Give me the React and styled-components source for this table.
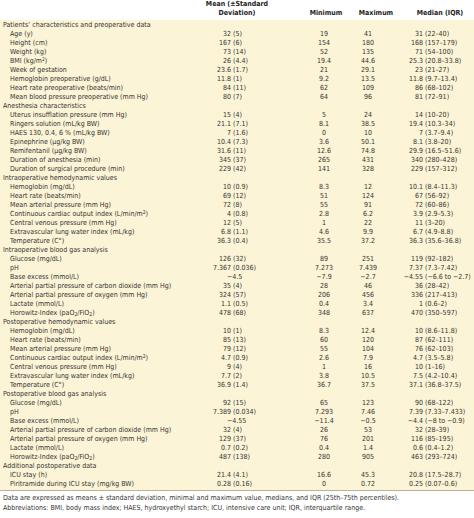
import React from 'react'
import styled, { createGlobalStyle } from 'styled-components'

const GlobalStyle = createGlobalStyle`
	html, body {
		margin: 0;
		padding: 0;
		background: #fff;
	}
	body {
		font-family: 'DejaVu Sans Condensed', 'Liberation Sans', Arial, sans-serif;
		color: #333;
	}
`

const Page = styled.div`
	width: 474px;
	font-size: 7px;
	line-height: 9px;
`

const HeaderRow = styled.div`
	display: grid;
	grid-template-columns: 200px 74px 22px 60px 40px 10px 68px;
	align-items: end;
	height: 20px;
	padding-bottom: 2px;
	box-sizing: border-box;
	background: #fff;
	font-weight: 700;
	color: #222;
`

const HeadCell = styled.div`
	grid-column: ${(props) => props.col};
	display: flex;
	flex-direction: column;
	align-items: center;
	white-space: nowrap;
`

const Body = styled.div`
	background: #fcf4d6;
	padding: 1px 0 1px;
	border-bottom: 1px solid #b9b29a;
`

const Row = styled.div`
	display: grid;
	grid-template-columns: 200px 31px 65px 56px 32px 39px 1fr;
	height: 9px;
	white-space: nowrap;
`

const Section = styled.div`
	height: 9px;
	padding-left: 3px;
	white-space: nowrap;
`

const Label = styled.div`
	padding-left: 10px;
`

const Num = styled.div`
	text-align: right;
`

const Spread = styled.div`
	padding-left: 2px;
`

const Solo = styled.div`
	grid-column: span 2;
	padding-left: 27px;
`

const Center = styled.div`
	text-align: center;
`

const Sub = styled.sub`
	font-size: 5px;
	line-height: 0;
	vertical-align: -1px;
`

const Sup = styled.sup`
	font-size: 5px;
	line-height: 0;
	vertical-align: 2px;
`

const Footer = styled.div`
	padding: 2px 3px 0;
	font-size: 7px;
	line-height: 10px;
	white-space: nowrap;
`

const m2 = (
	<>
		m<Sup>2</Sup>
	</>
)
const horowitz = (
	<>
		Horowitz-Index (paO<Sub>2</Sub>/FiO<Sub>2</Sub>)
	</>
)

const data = [
	['Patients’ characteristics and preoperative data'],
	['Age (y)', '32 (5)', '19', '41', '31 (22–40)'],
	['Height (cm)', '167 (6)', '154', '180', '168 (157–179)'],
	['Weight (kg)', '73 (14)', '52', '135', '71 (54–100)'],
	[<>BMI (kg/{m2})</>, '26 (4.4)', '19.4', '44.6', '25.3 (20.8–33.8)'],
	['Week of gestation', '23.6 (1.7)', '21', '29.1', '23 (21–27)'],
	['Hemoglobin preoperative (g/dL)', '11.8 (1)', '9.2', '13.5', '11.8 (9.7–13.4)'],
	['Heart rate preoperative (beats/min)', '84 (11)', '62', '109', '86 (68–102)'],
	['Mean blood pressure preoperative (mm Hg)', '80 (7)', '64', '96', '81 (72–91)'],
	['Anesthesia characteristics'],
	['Uterus insufflation pressure (mm Hg)', '15 (4)', '5', '24', '14 (10–20)'],
	['Ringers solution (mL/kg BW)', '21.1 (7.1)', '8.1', '38.5', '19.4 (10.3–34)'],
	['HAES 130, 0.4, 6 % (mL/kg BW)', '7 (1.6)', '0', '10', '7 (3.7–9.4)'],
	['Epinephrine (μg/kg BW)', '10.4 (7.3)', '3.6', '50.1', '8.1 (3.8–20)'],
	['Remifentanil (μg/kg BW)', '31.6 (11)', '12.6', '74.8', '29.9 (16.5–51.6)'],
	['Duration of anesthesia (min)', '345 (37)', '265', '431', '340 (280–428)'],
	['Duration of surgical procedure (min)', '229 (42)', '141', '328', '229 (157–312)'],
	['Intraoperative hemodynamic values'],
	['Hemoglobin (mg/dL)', '10 (0.9)', '8.3', '12', '10.1 (8.4–11.3)'],
	['Heart rate (beats/min)', '69 (12)', '51', '124', '67 (56–92)'],
	['Mean arterial pressure (mm Hg)', '72 (8)', '55', '91', '72 (60–86)'],
	[<>Continuous cardiac output index (L/min/{m2})</>, '4 (0.8)', '2.8', '6.2', '3.9 (2.9–5.3)'],
	['Central venous pressure (mm Hg)', '12 (5)', '1', '22', '11 (3–20)'],
	['Extravascular lung water index (mL/kg)', '6.8 (1.1)', '4.6', '9.9', '6.7 (4.9–8.8)'],
	['Temperature (C°)', '36.3 (0.4)', '35.5', '37.2', '36.3 (35.6–36.8)'],
	['Intraoperative blood gas analysis'],
	['Glucose (mg/dL)', '126 (32)', '89', '251', '119 (92–182)'],
	['pH', '7.367 (0.036)', '7.273', '7.439', '7.37 (7.3–7.42)'],
	['Base excess (mmol/L)', '−4.5', '−7.9', '−2.7', '−4.55 (−6.6 to −2.7)'],
	['Arterial partial pressure of carbon dioxide (mm Hg)', '35 (4)', '28', '46', '36 (28–42)'],
	['Arterial partial pressure of oxygen (mm Hg)', '324 (57)', '206', '456', '336 (217–413)'],
	['Lactate (mmol/L)', '1.1 (0.5)', '0.4', '3.4', '1 (0.6–2)'],
	[horowitz, '478 (68)', '348', '637', '470 (350–597)'],
	['Postoperative hemodynamic values'],
	['Hemoglobin (mg/dL)', '10 (1)', '8.3', '12.4', '10 (8.6–11.8)'],
	['Heart rate (beats/min)', '85 (13)', '60', '120', '87 (62–111)'],
	['Mean arterial pressure (mm Hg)', '79 (12)', '55', '104', '76 (62–103)'],
	[<>Continuous cardiac output index (L/min/{m2})</>, '4.7 (0.9)', '2.6', '7.9', '4.7 (3.5–5.8)'],
	['Central venous pressure (mm Hg)', '9 (4)', '1', '16', '10 (1–16)'],
	['Extravascular lung water index (mL/kg)', '7.7 (2)', '3.8', '10.5', '7.5 (4.2–10.4)'],
	['Temperature (C°)', '36.9 (1.4)', '36.7', '37.5', '37.1 (36.8–37.5)'],
	['Postoperative blood gas analysis'],
	['Glucose (mg/dL)', '92 (15)', '65', '123', '90 (68–122)'],
	['pH', '7.389 (0.034)', '7.293', '7.46', '7.39 (7.33–7.433)'],
	['Base excess (mmol/L)', '−4.55', '−11.4', '−0.5', '−4.4 (−8 to −0.9)'],
	['Arterial partial pressure of carbon dioxide (mm Hg)', '32 (4)', '26', '53', '32 (28–39)'],
	['Arterial partial pressure of oxygen (mm Hg)', '129 (37)', '76', '201', '116 (85–195)'],
	['Lactate (mmol/L)', '0.7 (0.2)', '0.4', '1.4', '0.6 (0.4–1.2)'],
	[horowitz, '487 (138)', '280', '905', '463 (293–724)'],
	['Additional postoperative data'],
	['ICU stay (h)', '21.4 (4.1)', '16.6', '45.3', '20.8 (17.5–28.7)'],
	['Piritramide during ICU stay (mg/kg BW)', '0.28 (0.16)', '0', '0.72', '0.25 (0.07–0.6)'],
]

const split = (value) => {
	const i = value.indexOf(' (')
	return i === -1 ? [value, null] : [value.slice(0, i), value.slice(i + 1)]
}

const DataRow = ({ label, mean, min, max, median }) => {
	const [meanNum, meanSd] = split(mean)
	const [medNum, medIqr] = split(median)
	return (
		<Row>
			<Label>{label}</Label>
			{meanSd ? (
				<>
					<Num>{meanNum}</Num>
					<Spread>{meanSd}</Spread>
				</>
			) : (
				<Solo>{meanNum}</Solo>
			)}
			<Center>{min}</Center>
			<Center>{max}</Center>
			<Num>{medNum}</Num>
			<Spread>{medIqr}</Spread>
		</Row>
	)
}

const App = () => {
	return (
		<>
			<GlobalStyle />
			<Page>
				<HeaderRow>
					<HeadCell col='2'>
						<span>Mean (±Standard</span>
						<span>Deviation)</span>
					</HeadCell>
					<HeadCell col='4'>Minimum</HeadCell>
					<HeadCell col='5'>Maximum</HeadCell>
					<HeadCell col='7'>Median (IQR)</HeadCell>
				</HeaderRow>
				<Body>
					{data.map((r, i) =>
						r.length === 1 ? (
							<Section key={i}>{r[0]}</Section>
						) : (
							<DataRow
								key={i}
								label={r[0]}
								mean={r[1]}
								min={r[2]}
								max={r[3]}
								median={r[4]}
							/>
						)
					)}
				</Body>
				<Footer>
					<div>
						Data are expressed as means ± standard deviation, minimal and
						maximum value, medians, and IQR (25th–75th percentiles).
					</div>
					<div>
						Abbreviations: BMI, body mass index; HAES, hydroxyethyl starch;
						ICU, intensive care unit; IQR, interquartile range.
					</div>
				</Footer>
			</Page>
		</>
	)
}

export default App
